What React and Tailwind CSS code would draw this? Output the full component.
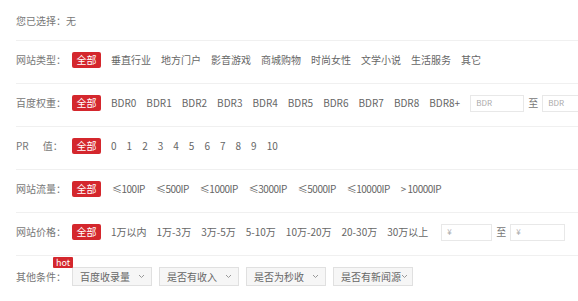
import React from "react";

const font = { fontFamily: '"Noto Sans CJK SC", "Noto Sans", sans-serif' };

function Badge() {
  return (
    <span className="shrink-0 inline-flex items-center justify-center w-[29px] h-[16px] rounded-[2px] bg-[#d4272d] text-white text-[10px] leading-none">
      全部
    </span>
  );
}

function Row({ label, items, extra, itemCls = "", gap = "gap-[10px]" }) {
  return (
    <div className="flex items-center h-[43px] pb-[4px] border-b border-[#f0f0f0] whitespace-nowrap">
      <span className="shrink-0 w-[56px] text-[#777]">{label}</span>
      <div className={`flex items-center ${gap}`}>
        <Badge />
        {items.map((t) => (
          <span key={t} className={`shrink-0 text-[#666] ${itemCls}`}>{t}</span>
        ))}
        {extra}
      </div>
    </div>
  );
}

function RangeInputs({ ph, w1, w2, g }) {
  return (
    <div className={`flex items-center shrink-0 ${g}`}>
      <div className={`shrink-0 ${w1} h-[17px] border border-[#e8e8e8] bg-white text-[8px] text-[#aaa] flex items-center pl-[5px]`}>{ph}</div>
      <span className="text-[#777] px-[4px]">至</span>
      <div className={`shrink-0 ${w2} h-[17px] border border-[#e8e8e8] bg-white text-[8px] text-[#aaa] flex items-center pl-[5px]`}>{ph}</div>
    </div>
  );
}

function Select({ text, w }) {
  return (
    <div className={`shrink-0 ${w} h-[19px] border border-[#e0e0e0] bg-[#f6f6f6] flex items-center justify-between pl-[7px] pr-[6px] text-[#666]`}>
      <span>{text}</span>
      <svg width="7" height="5" viewBox="0 0 7 5" className="shrink-0">
        <path d="M1 1 L3.5 3.5 L6 1" stroke="#999" strokeWidth="1" fill="none" />
      </svg>
    </div>
  );
}

export default function App() {
  return (
    <div className="w-full h-[301px] bg-white overflow-hidden text-[10px] leading-none" style={font}>
      <div className="pl-[16px]">
        <div className="h-[41px] flex items-center border-b border-[#f0f0f0] text-[#777] pt-[2px]">
          您已选择：无
        </div>
        <Row
          label="网站类型："
          items={["垂直行业", "地方门户", "影音游戏", "商城购物", "时尚女性", "文学小说", "生活服务", "其它"]}
        />
        <Row
          label="百度权重："
          items={["BDR0", "BDR1", "BDR2", "BDR3", "BDR4", "BDR5", "BDR6", "BDR7", "BDR8", "BDR8+"]}
          extra={<RangeInputs ph="BDR" w1="w-[54px]" w2="w-[54px]" g="" />}
        />
        <Row
          label={<span>PR<span className="inline-block w-[14px]"></span>值：</span>}
          items={["0", "1", "2", "3", "4", "5", "6", "7", "8", "9", "10"]}
        />
        <Row
          label="网站流量："
          itemCls="tracking-[-0.5px]"
          gap="gap-[11px]"
          items={["≤100IP", "≤500IP", "≤1000IP", "≤3000IP", "≤5000IP", "≤10000IP", "> 10000IP"]}
        />
        <Row
          label="网站价格："
          items={["1万以内", "1万-3万", "3万-5万", "5-10万", "10万-20万", "20-30万", "30万以上"]}
          extra={<RangeInputs ph="¥" w1="w-[51px]" w2="w-[55px]" g="ml-[3px]" />}
        />
        <div className="relative flex items-start pt-[11px] whitespace-nowrap">
          <span className="absolute left-[37px] top-[1px] h-[11px] px-[3px] bg-[#d4272d] text-white text-[9px] leading-[11px] rounded-[1px]">
            hot
          </span>
          <span className="shrink-0 w-[56px] text-[#777] h-[19px] flex items-center">其他条件：</span>
          <div className="flex items-center gap-[7px]">
            <Select text="百度收录量" w="w-[80px]" />
            <Select text="是否有收入" w="w-[80px]" />
            <Select text="是否为秒收" w="w-[80px]" />
            <Select text="是否有新闻源" w="w-[80px]" />
          </div>
        </div>
      </div>
    </div>
  );
}
